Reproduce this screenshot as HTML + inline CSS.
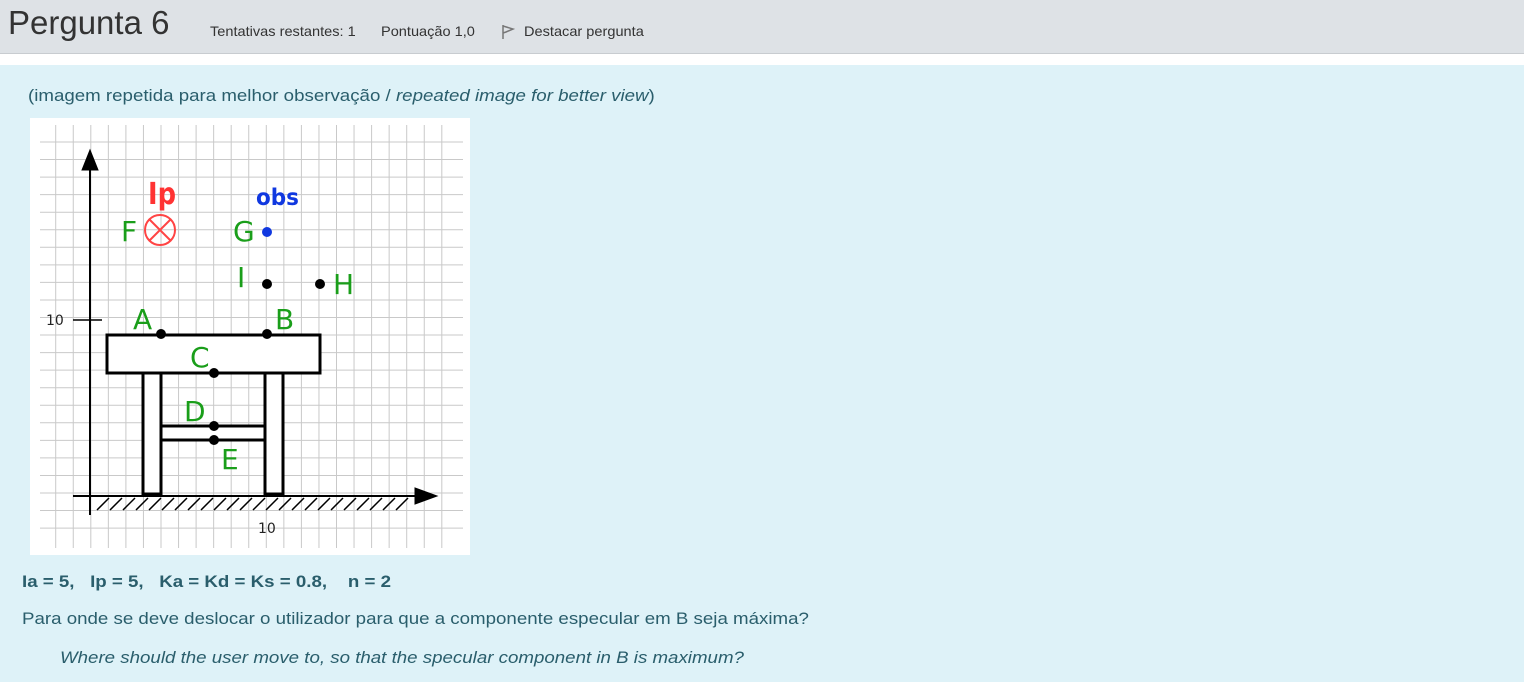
<!DOCTYPE html>
<html><head><meta charset="utf-8"><style>
body{margin:0;width:1524px;height:682px;overflow:hidden;background:#def2f8;font-family:"Liberation Sans",Arial,sans-serif;color:#2a5e6c}
.hdr{position:absolute;left:0;top:0;width:1524px;height:53px;background:#dee2e6;border-bottom:1px solid #c8ccd0}
.gap{position:absolute;left:0;top:54px;width:1524px;height:11px;background:#fff}
.t{position:absolute;white-space:nowrap}
.s{transform:scaleX(1.1);transform-origin:0 0}
</style></head><body>
<div class="hdr"></div><div class="gap"></div>
<div class="t" style="left:8px;top:4px;font-size:33px;color:#333">Pergunta 6</div>
<div class="t" style="left:210px;top:23px;font-size:14px;color:#333;transform:scaleX(1.04);transform-origin:0 0">Tentativas restantes: 1</div>
<div class="t" style="left:381px;top:23px;font-size:14px;color:#333;transform:scaleX(1.04);transform-origin:0 0">Pontuação 1,0</div>
<svg style="position:absolute;left:501px;top:24px" width="14" height="16" viewBox="0 0 14 16"><path d="M2 1 L2 15 M2 2 L12 5 L5 8 L2 9" fill="none" stroke="#777" stroke-width="1.5"/></svg>
<div class="t" style="left:524px;top:23px;font-size:14px;color:#333;transform:scaleX(1.04);transform-origin:0 0">Destacar pergunta</div>
<div class="t s" style="left:28px;top:86px;font-size:17px">(imagem repetida para melhor observação / <i>repeated image for better view</i>)</div>
<svg style="position:absolute;left:30px;top:118px" width="440" height="437" viewBox="0 0 440 437">
<rect width="440" height="437" fill="#fff"/>
<path stroke="#c9c9c9" stroke-width="1" fill="none" d="M25.7 7v423m17.55 -423v423m17.55 -423v423m17.55 -423v423m17.55 -423v423m17.55 -423v423m17.55 -423v423m17.55 -423v423m17.55 -423v423m17.55 -423v423m17.55 -423v423m17.55 -423v423m17.55 -423v423m17.55 -423v423m17.55 -423v423m17.55 -423v423m17.55 -423v423m17.55 -423v423m17.55 -423v423m17.55 -423v423m17.55 -423v423m17.55 -423v423m17.55 -423v423
M10 24h423m-423 17.55h423m-423 17.55h423m-423 17.55h423m-423 17.55h423m-423 17.55h423m-423 17.55h423m-423 17.55h423m-423 17.55h423m-423 17.55h423m-423 17.55h423m-423 17.55h423m-423 17.55h423m-423 17.55h423m-423 17.55h423m-423 17.55h423m-423 17.55h423m-423 17.55h423m-423 17.55h423m-423 17.55h423m-423 17.55h423m-423 17.55h423m-423 17.55h423"/>
<g stroke="#000" fill="none">
<path d="M60 397V40" stroke-width="2"/><path d="M52 52L60 32L68 52Z" fill="#000"/>
<path d="M43 378H390" stroke-width="2"/><path d="M385 370L407 378L385 386Z" fill="#000"/>
<path d="M43 202H72" stroke-width="1.5"/>
<path d="M67 392l12-12M80 392l12-12M93 392l12-12M106 392l12-12M119 392l12-12M132 392l12-12M145 392l12-12M158 392l12-12M171 392l12-12M184 392l12-12M197 392l12-12M210 392l12-12M223 392l12-12M236 392l12-12M249 392l12-12M262 392l12-12M275 392l12-12M288 392l12-12M301 392l12-12M314 392l12-12M327 392l12-12M340 392l12-12M353 392l12-12M366 392l12-12" stroke-width="1.5"/>
<rect x="77" y="217" width="213" height="38" fill="#fff" stroke-width="3"/>
<rect x="113" y="255" width="18" height="121" fill="#fff" stroke-width="3"/>
<rect x="235" y="255" width="18" height="121" fill="#fff" stroke-width="3"/>
<rect x="131" y="308" width="104" height="14" fill="#fff" stroke-width="3"/>
<circle cx="130" cy="112" r="15" stroke="#f44" stroke-width="2"/><path d="M119.5 101.5L140.5 122.5M140.5 101.5L119.5 122.5" stroke="#f44" stroke-width="2"/>
</g>
<g fill="#000"><circle cx="131" cy="216" r="5"/><circle cx="237" cy="216" r="5"/><circle cx="184" cy="255" r="5"/><circle cx="184" cy="308" r="5"/><circle cx="184" cy="322" r="5"/><circle cx="237" cy="166" r="5"/><circle cx="290" cy="166" r="5"/></g>
<circle cx="237" cy="114" r="5" fill="#1038e0"/>
<g font-family="DejaVu Sans,sans-serif">
<text x="118" y="86" font-size="30" font-weight="bold" fill="#f33" textLength="28" lengthAdjust="spacingAndGlyphs">Ip</text>
<text x="226" y="87" font-size="23" font-weight="bold" fill="#1038e0" textLength="43" lengthAdjust="spacingAndGlyphs">obs</text>
<g fill="#1a9e1a" font-size="28">
<text x="91" y="123">F</text><text x="203" y="123">G</text><text x="207" y="169">I</text><text x="303" y="176">H</text>
<text x="103" y="211">A</text><text x="245" y="211">B</text><text x="160" y="249">C</text><text x="154" y="303">D</text><text x="191" y="351">E</text></g>
<text x="16" y="207" font-size="14" fill="#222">10</text>
<text x="228" y="415" font-size="14" fill="#222">10</text>
</g>
</svg>
<div class="t s" style="left:22px;top:572px;font-size:17px;font-weight:bold">Ia = 5,&nbsp;&nbsp; Ip = 5,&nbsp;&nbsp; Ka = Kd = Ks = 0.8,&nbsp;&nbsp;&nbsp; n = 2</div>
<div class="t s" style="left:22px;top:609px;font-size:17px">Para onde se deve deslocar o utilizador para que a componente especular em B seja máxima?</div>
<div class="t s" style="left:60px;top:648px;font-size:17px;font-style:italic">Where should the user move to, so that the specular component in B is maximum?</div>
</body></html>
